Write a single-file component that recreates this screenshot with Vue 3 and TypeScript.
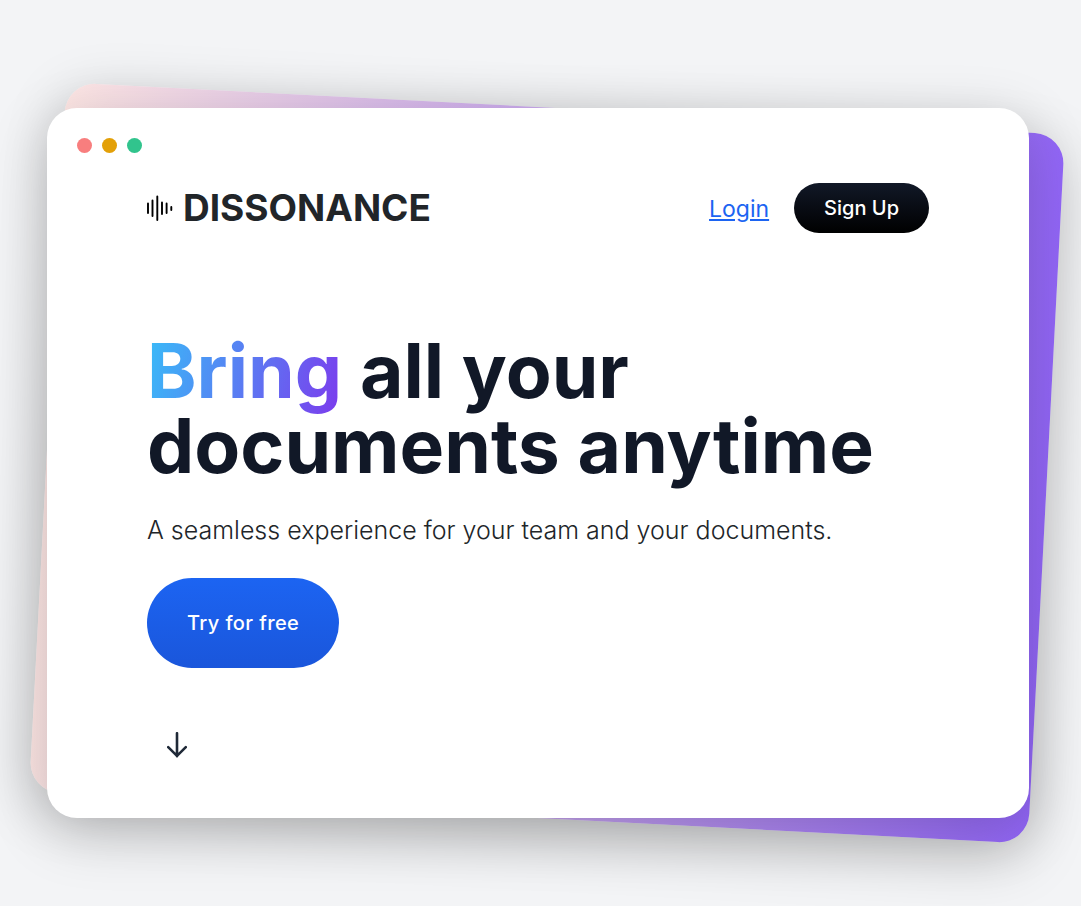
<script setup lang="ts">
interface WindowDot {
  name: string
}

const dots: WindowDot[] = [{ name: 'red' }, { name: 'amber' }, { name: 'green' }]
</script>

<template>
  <main class="page">
    <div class="stage">
      <div class="backdrop" aria-hidden="true"></div>
      <section class="card">
        <div class="dots" aria-hidden="true">
          <span v-for="dot in dots" :key="dot.name" class="dot" :class="dot.name"></span>
        </div>
        <div class="content">
          <header class="bar">
            <div class="brand">
              <svg class="wave" viewBox="0 0 26 26" aria-hidden="true">
                <path
                  d="M1 8.5v9.5M5.5 5.5v15.5M10.3 1.5v23.5M15 7.5v11.5M19.6 8.5v9.5M24.3 12v3"
                  fill="none"
                  stroke="#000"
                  stroke-width="1.9"
                  stroke-linecap="round"
                />
              </svg>
              <span>DISSONANCE</span>
            </div>
            <nav class="links">
              <a class="login" href="#login">Login</a>
              <button class="signup" type="button">Sign Up</button>
            </nav>
          </header>
          <h1 class="title"><span class="accent">Bring</span> all your documents anytime</h1>
          <p class="lead">A seamless experience for your team and your documents.</p>
          <button class="cta" type="button">Try for free</button>
          <svg class="arrow" viewBox="0 0 20 26" role="img" aria-label="Scroll down">
            <path
              d="M10 1.2v23M1.2 15.2l8.8 8.7 8.8-8.7"
              fill="none"
              stroke="#1f2937"
              stroke-width="2.6"
              stroke-linecap="round"
              stroke-linejoin="round"
            />
          </svg>
        </div>
      </section>
    </div>
  </main>
</template>

<style>
body {
  background: #f3f4f6;
}
</style>

<style scoped>
.page {
  box-sizing: border-box;
  min-height: 100vh;
  padding: 108px 52px 88px 47px;
  overflow: hidden;
  background: #f3f4f6;
  color: #212529;
  font-family: Inter, 'Liberation Sans', sans-serif;
}

.stage {
  position: relative;
}

.backdrop,
.card {
  border-radius: 30px;
  box-shadow: 0 15px 60px rgba(0, 0, 0, 0.2);
}

.backdrop {
  position: absolute;
  inset: 0 -18px 0 0;
  background: linear-gradient(90deg, #fde6e4, #9266f7);
  transform: rotate(3deg);
}

.card {
  position: relative;
  padding: 30px 30px 60px;
  background: #fff;
}

.dots {
  display: flex;
  gap: 10px;
}

.dot {
  width: 15px;
  height: 15px;
  border-radius: 50%;
}

.red {
  background: #f87e7e;
}

.amber {
  background: #e3a008;
}

.green {
  background: #31c48d;
}

.content {
  padding: 30px 70px 0;
}

.bar {
  display: flex;
  align-items: center;
  justify-content: space-between;
}

.brand {
  display: flex;
  align-items: center;
  gap: 10px;
  font-size: 37px;
  font-weight: 700;
  line-height: 50px;
}

.wave {
  width: 26px;
  height: 26px;
}

.links {
  display: flex;
  align-items: center;
  gap: 25px;
}

.login {
  padding-top: 2px;
  color: #1c64f2;
  font-size: 23px;
  line-height: 34px;
}

.signup,
.cta {
  border: 0;
  color: #fff;
  font-family: inherit;
  font-weight: 500;
  cursor: pointer;
}

.signup {
  padding: 10px 30px;
  border-radius: 25px;
  background: linear-gradient(#111827, #000);
  font-size: 20px;
  line-height: 30px;
}

.title {
  margin: 100px 0 0;
  color: #111827;
  font-size: 75px;
  font-weight: 700;
  line-height: 75px;
}

.accent {
  background: linear-gradient(105deg, #38bdf8, #7c3aed);
  background-clip: text;
  -webkit-background-clip: text;
  color: transparent;
}

.lead {
  margin: 27px 0 0;
  font-size: 25px;
  font-weight: 300;
  line-height: 40px;
}

.cta {
  display: block;
  margin-top: 28px;
  padding: 30px 40px;
  border-radius: 45px;
  background: linear-gradient(#1c64f2, #1a56db);
  font-size: 20px;
  letter-spacing: 0.02em;
  line-height: 30px;
}

.arrow {
  display: block;
  width: 20px;
  height: 26px;
  margin: 64px 0 0 20px;
}
</style>
